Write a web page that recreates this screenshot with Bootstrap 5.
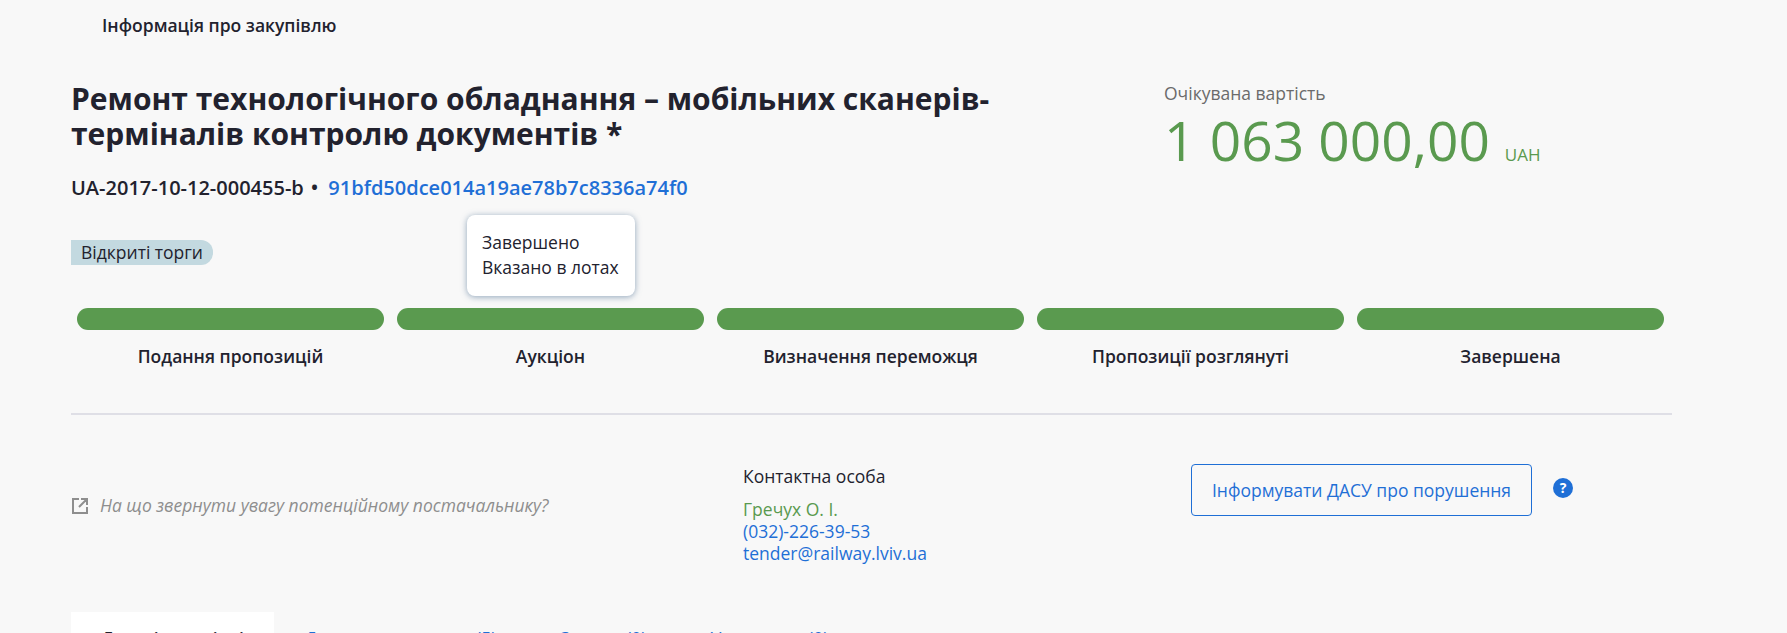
<!DOCTYPE html>
<html lang="uk">
<head>
  <meta charset="UTF-8">
  <title>Інформація про закупівлю</title>
  <link href="https://cdn.jsdelivr.net/npm/bootstrap@5.3.3/dist/css/bootstrap.min.css" rel="stylesheet">
  <style>
    html, body { height: 633px; overflow: hidden; }
    body {
      font-family: "Open Sans", "Noto Sans", sans-serif;
      background: #f8f8f8;
      color: #22222e;
      font-size: 17.5px;
    }
    a { color: #1f6fd6; text-decoration: none; }
    .page-wrap { width: 1601px; margin-left: 71px; }
    .crumb-line { padding: 13px 0 0 31px; height: 81px; font-size: 17.5px; font-weight: 600; line-height: 24px; }
    .tender-head { height: 129px; }
    .tender-left { width: 1093px; }
    .tender-title { width: 960px; font-size: 30px; font-weight: 700; line-height: 35px; margin: 0; }
    .tender-ids { font-size: 20px; font-weight: 600; line-height: 24px; margin-top: 25px; }
    .id-dot { margin: 0 10px 0 7px; }
    .price-label { font-size: 17.5px; color: #6b6b6b; line-height: 24px; }
    .price-value { font-size: 55px; color: #5a9a4f; line-height: 66px; margin-top: 2px; }
    .price-cur { font-size: 17px; margin-left: 15px; }
    .type-row { position: relative; height: 98px; padding-top: 29px; }
    .type-tag { display: inline-block; background: #c3d9e0; line-height: 25px; padding: 0 10px; border-radius: 0 12px 12px 0; }
    .stage-tip { position: absolute; left: 396px; top: 5px; width: 168px; height: 81px; background: #fff; border-radius: 8px; box-shadow: 0 1px 6px rgba(100,130,160,.7); padding: 15px 15px; line-height: 25px; }
    .stage-row { padding: 0 8px 0 6px; gap: 13px; }
    .stage-item { flex: 1 1 0; text-align: center; font-weight: 600; }
    .stage-bar { height: 22px; background: #5a9a4f; border-radius: 11px; margin-bottom: 14px; }
    .stage-name { line-height: 24px; }
    .sep-line { height: 2px; background: #dfdfe6; margin-top: 45px; }
    .contact-row { height: 197px; }
    .hint-col { width: 672px; padding-top: 77px; font-style: italic; color: #8e8e8e; }
    .hint-col svg { margin-right: 11px; vertical-align: -3px; }
    .contact-col { width: 448px; padding-top: 50px; line-height: 22px; }
    .contact-name { color: #5a9a4f; margin-top: 11px; }
    .report-col { padding-top: 49px; }
    .btn-report { width: 341px; height: 52px; border: 1px solid #1f6fd6; border-radius: 4px; color: #1f6fd6; background: transparent; font-size: 17.5px; padding: 0; }
    .help-dot { width: 20px; height: 20px; margin: 14px 0 0 21px; border-radius: 50%; background: #1f6fd6; color: #fff; font-size: 14px; font-weight: 700; line-height: 20px; text-align: center; }
    .tab-row { height: 60px; }
    .tab-on { width: 203px; height: 60px; background: #fff; padding-top: 14px; text-align: center; font-weight: 600; line-height: 24px; }
    .tab-off { padding: 14px 33px 0 31px; color: #1f6fd6; line-height: 24px; }
  </style>
</head>
<body>
  <div class="page-wrap">
    <div class="crumb-line">Інформація про закупівлю</div>

    <div class="tender-head d-flex">
      <div class="tender-left">
        <h1 class="tender-title">Ремонт технологічного обладнання – мобільних сканерів-терміналів контролю документів *</h1>
        <div class="tender-ids">UA-2017-10-12-000455-b<span class="id-dot">•</span><a href="#">91bfd50dce014a19ae78b7c8336a74f0</a></div>
      </div>
      <div>
        <div class="price-label">Очікувана вартість</div>
        <div class="price-value">1 063 000,00<span class="price-cur">UAH</span></div>
      </div>
    </div>

    <div class="type-row">
      <span class="type-tag">Відкриті торги</span>
      <div class="stage-tip">Завершено<br>Вказано в лотах</div>
    </div>

    <div class="stage-row d-flex">
      <div class="stage-item"><div class="stage-bar"></div><div class="stage-name">Подання пропозицій</div></div>
      <div class="stage-item"><div class="stage-bar"></div><div class="stage-name">Аукціон</div></div>
      <div class="stage-item"><div class="stage-bar"></div><div class="stage-name">Визначення переможця</div></div>
      <div class="stage-item"><div class="stage-bar"></div><div class="stage-name">Пропозиції розглянуті</div></div>
      <div class="stage-item"><div class="stage-bar"></div><div class="stage-name">Завершена</div></div>
    </div>

    <div class="sep-line"></div>

    <div class="contact-row d-flex">
      <div class="hint-col">
        <svg width="18" height="18" viewBox="0 0 18 18" fill="none" stroke="#8e8e8e" stroke-width="2"><path d="M8 2H2v14h14v-6M10 2h6v6M16 2L8 10"/></svg>На що звернути увагу потенційному постачальнику?
      </div>
      <div class="contact-col">
        <div>Контактна особа</div>
        <div class="contact-name">Гречух О. І.</div>
        <div><a href="#">(032)-226-39-53</a></div>
        <div><a href="#">tender@railway.lviv.ua</a></div>
      </div>
      <div class="report-col d-flex align-items-start">
        <button type="button" class="btn btn-report">Інформувати ДАСУ про порушення</button>
        <div class="help-dot">?</div>
      </div>
    </div>

    <div class="tab-row d-flex">
      <div class="tab-on">Деталі закупівлі</div>
      <div class="tab-off">Документи тендеру (5)</div>
      <div class="tab-off">Запити (0)</div>
      <div class="tab-off">Уточнення (0)</div>
    </div>
  </div>
  <script src="https://cdn.jsdelivr.net/npm/bootstrap@5.3.3/dist/js/bootstrap.bundle.min.js"></script>
</body>
</html>
